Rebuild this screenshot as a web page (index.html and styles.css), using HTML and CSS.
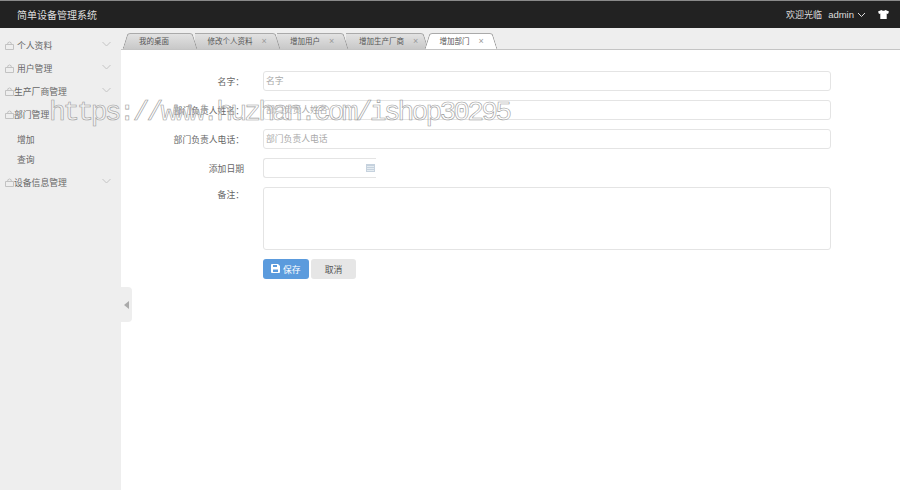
FILE: index.html
```html
<!DOCTYPE html>
<html lang="zh">
<head>
    <meta charset="UTF-8">
    <title>简单设备管理系统</title>
    <link rel="stylesheet" href="styles.css">
</head>
<body>

<div class="topbar">
    <div class="logo">简单设备管理系统</div>
    <div class="top-right">
        <span class="welcome">欢迎光临</span>
        <span class="user">admin</span>
        <svg class="user-arrow" width="9" height="6" viewBox="0 0 9 6"><path d="M1 1l3.500 3.500L8 1" fill="none" stroke="#ddd" stroke-width="1"/></svg>
        <svg class="shirt" width="11" height="9" viewBox="0 0 11 9"><path d="M3.500 0L0 1.500 1 4l1.300-.5V9h6.400V3.500L10 4l1-2.500L7.500 0C7 1 4 1 3.500 0z" fill="#fff"/></svg>
    </div>
</div>

<div class="main">
    <div class="sidebar">
        <div class="menu-item">
            <svg class="lock" width="9" height="9" viewBox="0 0 9 9"><path d="M.5 3.500h8v5h-8zM2.800 3.500V1.800q1.700-1.800 3.400 0v1.700" fill="none" stroke="#c2c2c2"/></svg>
            <span class="menu-gap">个人资料</span>
            <svg class="chev" width="9" height="6" viewBox="0 0 9 6"><path d="M.5 1l4 4 4-4" fill="none" stroke="#c4c4c4"/></svg>
        </div>
        <div class="menu-item">
            <svg class="lock" width="9" height="9" viewBox="0 0 9 9"><path d="M.5 3.500h8v5h-8zM2.800 3.500V1.800q1.700-1.800 3.400 0v1.700" fill="none" stroke="#c2c2c2"/></svg>
            <span class="menu-gap">用户管理</span>
            <svg class="chev" width="9" height="6" viewBox="0 0 9 6"><path d="M.5 1l4 4 4-4" fill="none" stroke="#c4c4c4"/></svg>
        </div>
        <div class="menu-item">
            <svg class="lock" width="9" height="9" viewBox="0 0 9 9"><path d="M.5 3.500h8v5h-8zM2.800 3.500V1.800q1.700-1.800 3.400 0v1.700" fill="none" stroke="#c2c2c2"/></svg>
            <span>生产厂商管理</span>
            <svg class="chev" width="9" height="6" viewBox="0 0 9 6"><path d="M.5 1l4 4 4-4" fill="none" stroke="#c4c4c4"/></svg>
        </div>
        <div class="menu-item">
            <svg class="lock" width="9" height="9" viewBox="0 0 9 9"><path d="M.5 3.500h8v5h-8zM2.800 3.500V1.800q1.700-1.800 3.400 0v1.700" fill="none" stroke="#c2c2c2"/></svg>
            <span>部门管理</span>
        </div>
        <div class="sub-list">
            <div class="sub-item">增加</div>
            <div class="sub-item">查询</div>
        </div>
        <div class="menu-item menu-last">
            <svg class="lock" width="9" height="9" viewBox="0 0 9 9"><path d="M.5 3.500h8v5h-8zM2.800 3.500V1.800q1.700-1.800 3.400 0v1.700" fill="none" stroke="#c2c2c2"/></svg>
            <span>设备信息管理</span>
            <svg class="chev" width="9" height="6" viewBox="0 0 9 6"><path d="M.5 1l4 4 4-4" fill="none" stroke="#c4c4c4"/></svg>
        </div>
    </div>

    <div class="content">
        <div class="collapse">
            <svg width="5" height="8" viewBox="0 0 5 8"><path d="M5 0v8L0 4z" fill="#aaa"/></svg>
        </div>
        <div class="tabs">
            <div class="tab tab-first">我的桌面</div>
            <div class="tab tab-second">修改个人资料<span class="close">×</span></div>
            <div class="tab tab-third">增加用户<span class="close">×</span></div>
            <div class="tab tab-fourth">增加生产厂商<span class="close">×</span></div>
            <div class="tab tab-active">增加部门<span class="close">×</span></div>
        </div>

        <form class="form">
            <div class="row">
                <label class="label">名字：</label>
                <input class="input" placeholder="名字">
            </div>
            <div class="row">
                <label class="label">部门负责人姓名：</label>
                <input class="input" placeholder="部门负责人姓名">
            </div>
            <div class="row">
                <label class="label">部门负责人电话：</label>
                <input class="input" placeholder="部门负责人电话">
            </div>
            <div class="row">
                <label class="label">添加日期</label>
                <div class="date">
                    <svg width="9" height="8" viewBox="0 0 9 8"><path d="M0 0h9v8H0z" fill="#c6d2de"/><path d="M1 2.500h7M1 4.500h7M1 6.500h7" stroke="#eef2f6" stroke-width=".8"/></svg>
                </div>
            </div>
            <div class="row row-top">
                <label class="label">备注：</label>
                <textarea class="textarea"></textarea>
            </div>
            <div class="buttons">
                <button type="button" class="btn btn-save">
                    <svg width="9" height="9" viewBox="0 0 9 9"><path d="M0 1q0-1 1-1h6l2 2v6q0 1-1 1H1q-1 0-1-1z" fill="#fff"/><path d="M2 1h4v2H2zM2 5.500h5V8H2z" fill="#5b9bdd"/></svg>
                    保存
                </button>
                <button type="button" class="btn btn-cancel">取消</button>
            </div>
        </form>
    </div>
</div>

<div class="watermark">https://www.huzhan.com/ishop30295</div>

</body>
</html>
```

FILE: styles.css
```css
html, body {
    margin: 0;
    padding: 0;
    height: 100%;
    overflow: hidden;
    background-color: #fff;
    font-family: "Liberation Sans", "Noto Sans CJK SC", sans-serif;
    color: #666;
}
.topbar {
    height: 27px;
    background-color: #222;
    border-top: 1px solid #8a8a8a;
    display: flex;
    align-items: center;
    justify-content: space-between;
    padding: 0 11px 0 17px;
}
.logo {
    color: #ddd;
    font-size: 10px;
}
.top-right {
    display: flex;
    align-items: center;
    color: #ddd;
    font-size: 9px;
}
.user {
    margin-left: 6px;
    font-size: 9.500px;
}
.user-arrow {
    margin-left: 3px;
}
.shirt {
    margin-left: 12px;
}
.main {
    display: flex;
    height: 462px;
}
.sidebar {
    width: 121px;
    flex-shrink: 0;
    background-color: #eeeeee;
    padding-top: 6px;
    box-sizing: border-box;
    font-size: 8.800px;
    color: #666;
}
.menu-item {
    height: 23px;
    display: flex;
    align-items: center;
    padding-left: 5px;
    position: relative;
}
.menu-last {
    margin-top: 1px;
}
.menu-gap {
    margin-left: 3px;
}
.chev {
    position: absolute;
    right: 10px;
    top: 7px;
}
.sub-list {
    padding-top: 4px;
}
.sub-item {
    height: 20px;
    line-height: 20px;
    padding-left: 17px;
}
.content {
    flex: 1;
    position: relative;
}
.collapse {
    position: absolute;
    left: 0;
    top: 259px;
    width: 11px;
    height: 35px;
    background-color: #eeeeee;
    border-radius: 0 4px 4px 0;
    display: flex;
    align-items: center;
    justify-content: center;
}
.tabs {
    height: 22px;
    box-sizing: border-box;
    background-color: #eeeeee;
    border-bottom: 1px solid #c4c4c4;
    display: flex;
    align-items: flex-end;
    font-size: 7.500px;
    color: #555;
    padding-left: 3.500px;
}
.tab {
    height: 16px;
    line-height: 17px;
    position: relative;
    white-space: nowrap;
    box-sizing: border-box;
    padding-left: 13px;
}
.tab::before, .tab::after {
    content: "";
    position: absolute;
    top: 0;
    bottom: 0;
    width: 60%;
    z-index: -1;
    background: linear-gradient(#e2e2e2, #c8c8c8);
    border-top: 1px solid #aaa;
    box-sizing: border-box;
}
.tab::before {
    left: 0;
    border-left: none;
}
.tab::after {
    right: 0;
    transform: skewX(17deg);
    border-right: 1px solid #999;
    border-radius: 0 3px 0 0;
}
.tab-first {
    width: 70px;
    padding-left: 14.500px;
    z-index: 4;
}
.tab-first::before {
    transform: skewX(-17deg);
    border-left: 1px solid #999;
    border-radius: 3px 0 0 0;
}
.tab-second {
    width: 82.500px;
    z-index: 3;
}
.tab-third {
    width: 69px;
    z-index: 2;
}
.tab-fourth {
    width: 80.500px;
    z-index: 1;
}
.tab-active {
    width: 68px;
    height: 17px;
    margin-bottom: -1px;
    z-index: 5;
}
.tab-active::before, .tab-active::after {
    background: #fff;
    bottom: 1px;
}
.tab-active::before {
    transform: skewX(-17deg);
    border-left: 1px solid #999;
    border-radius: 3px 0 0 0;
}
.close {
    margin-left: 9px;
    color: #999;
    font-size: 9px;
}
.form {
    padding-top: 21px;
}
.row {
    display: flex;
    align-items: center;
    margin-bottom: 9px;
    font-size: 8.800px;
}
.row-top {
    align-items: flex-start;
}
.label {
    width: 123px;
    text-align: right;
    margin-right: 19px;
    color: #666;
}
.row-top .label {
    line-height: 17px;
}
.input, .date, .textarea {
    box-sizing: border-box;
    border: 1px solid #e4e4e4;
    border-radius: 3px;
    background-color: #fff;
    font-family: inherit;
    font-size: 8.800px;
    margin: 0;
    outline: none;
}
.input {
    width: 568px;
    height: 20px;
    padding: 0 2px;
}
.input::placeholder {
    color: #aaa;
    opacity: 1;
}
.date {
    width: 113px;
    height: 20px;
    border-right: none;
    border-radius: 3px 0 0 3px;
    display: flex;
    align-items: center;
    justify-content: flex-end;
    padding-right: 1px;
}
.textarea {
    width: 568px;
    height: 63px;
    display: block;
    resize: none;
}
.buttons {
    display: flex;
    gap: 2px;
    margin-left: 142px;
}
.btn {
    height: 20px;
    border: none;
    border-radius: 3px;
    font-family: inherit;
    font-size: 8.800px;
    padding: 0;
}
.btn-save {
    width: 46px;
    background-color: #5b9bdd;
    color: #fff;
}
.btn-cancel {
    width: 45px;
    background-color: #e6e6e6;
    color: #555;
}
.watermark {
    position: absolute;
    left: 49px;
    top: 97px;
    font-family: "Liberation Mono", monospace;
    font-size: 28px;
    letter-spacing: -2.860px;
    color: rgba(255, 255, 255, 0.3);
    -webkit-text-stroke: 0.6px #9c9c9c;
    white-space: nowrap;
    pointer-events: none;
}
```
